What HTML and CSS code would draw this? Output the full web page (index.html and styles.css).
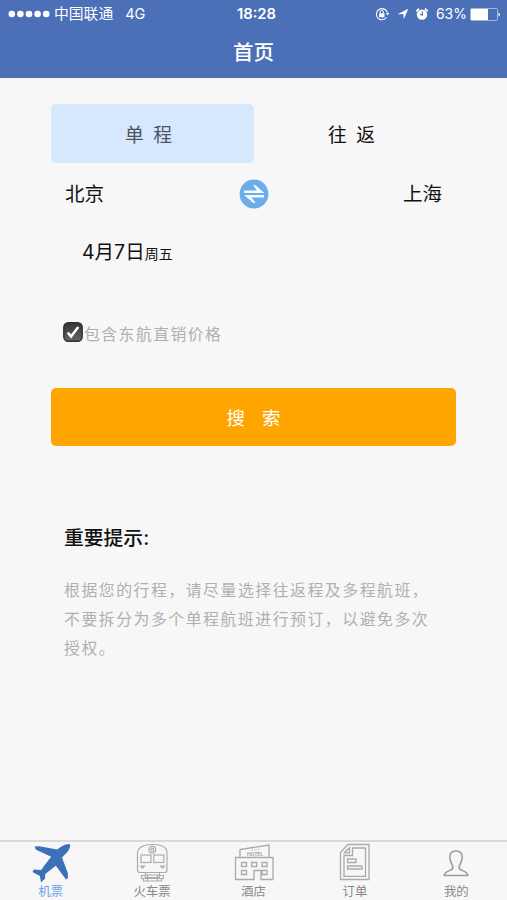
FILE: index.html
```html
<!DOCTYPE html>
<html lang="zh-CN">
<head>
<meta charset="utf-8">
<title>首页</title>
<link rel="stylesheet" href="styles.css">
</head>
<body>
<header class="header">
  <div class="status">
    <div class="status-left">
      <svg width="42" height="8" viewBox="0 0 42 8" fill="#fff"><circle cx="3.8" cy="4" r="3.3"/><circle cx="12.4" cy="4" r="3.3"/><circle cx="21" cy="4" r="3.3"/><circle cx="29.6" cy="4" r="3.3"/><circle cx="38.2" cy="4" r="3.3"/></svg>
      <span class="carrier">中国联通</span><span class="network">4G</span>
    </div>
    <span class="clock">18:28</span>
    <div class="status-right">
      <svg width="15" height="14" viewBox="0 0 15 14"><path d="M11.500 10.500A5.600 5.600 0 1 1 12.200 5.200" fill="none" stroke="#fff" stroke-width="1.1"/><path d="M10.800 5.800h3.600l-1.800 2.700z" fill="#fff"/><rect x="4.100" y="6.300" width="5.400" height="4" fill="#fff"/><path d="M5.200 6.500V5a1.600 1.600 0 0 1 3.200 0v1.500" fill="none" stroke="#fff"/></svg>
      <svg class="locate" width="12" height="12" viewBox="0 0 12 12"><path d="M.5 6.200 11.300.7 6.800 11.300 6.300 6.100z" fill="#fff"/></svg>
      <svg class="alarm" width="14" height="14" viewBox="0 0 14 14"><circle cx="7" cy="7.600" r="5.200" fill="#fff"/><path d="M1.300 4.300 4 1.600M10 1.600l2.700 2.700" stroke="#fff" stroke-width="1.800"/><path d="M7.400 4.500v3.600L5 7.200" fill="none" stroke="#4b70b8" stroke-width="1.100"/></svg>
      <span class="percent">63%</span>
      <svg width="31" height="13" viewBox="0 0 31 13"><rect x=".5" y=".5" width="27" height="12" rx="1.200" fill="none" stroke="#a5b8dc"/><rect x="1" y="1" width="17" height="11" fill="#fff"/><path d="M28.500 4.400q3 2.100 0 4.200z" fill="#fff"/></svg>
    </div>
  </div>
  <h1 class="title">首页</h1>
</header>
<main class="content">
  <div class="trip-tabs">
    <button class="trip-tab active">单 程</button>
    <button class="trip-tab">往 返</button>
  </div>
  <div class="route">
    <span>北京</span>
    <svg width="30" height="30" viewBox="0 0 30 30"><circle cx="15" cy="15" r="14.400" fill="#6dacea"/><path d="M5 11.500h13L14.200 6.500l1.800-.8 9.300 8.200H5zM25 16.100v2.400H12.300l4.200 5-1.800.8-9.700-8.200z" fill="#f8fbff"/></svg>
    <span>上海</span>
  </div>
  <div class="date">4月7日<span class="weekday">周五</span></div>
  <label class="option">
    <svg width="20" height="20" viewBox="0 0 20 20"><defs><linearGradient id="check" x2="0" y2="1"><stop stop-color="#333"/><stop offset="1" stop-color="#656565"/></linearGradient></defs><rect x=".8" y=".8" width="18.400" height="18.400" rx="4.500" fill="url(#check)" stroke="#303030" stroke-width="1.400"/><path d="m4.800 10.600 3.300 4L15.300 5" fill="none" stroke="#fff" stroke-width="2.500"/></svg>
    <span>包含东航直销价格</span>
  </label>
  <button class="search">搜 索</button>
  <section class="notice">
    <h2>重要提示:</h2>
    <p>根据您的行程，请尽量选择往返程及多程航班，<br>不要拆分为多个单程航班进行预订，以避免多次<br>授权。</p>
  </section>
</main>
<nav class="tabbar">
  <a class="tab current"><svg width="42" height="40" viewBox="0 0 42 40"><path d="M38.500 1c2 0 2 2 1 4.400-1 2.700-4 5.600-7.500 9.100L37.800 30l.2 5-2 1.500-10.100-13.800-8.800 6.800-2 2v4l-4.100 4-1.100-6.400-7.400-4.200 1.300-2.300 7.500.3 3-4.500 6.900-8.700L6 6.800 4.500 3.500l5-.2 17.700 3.300C31.500 3.200 35 1 38.500 1z" fill="#3c70b7"/></svg><span>机票</span></a>
  <a class="tab"><svg width="42" height="40" viewBox="0 0 42 40" fill="none" stroke="#acacac" stroke-width="1.200"><path d="M9 29.500a2.500 2.500 0 0 1-2.500-2.500V10C6.500 4.500 12 1.500 21.300 1.500S36 4.500 36 10v17a2.500 2.500 0 0 1-2.500 2.500z"/><circle cx="21.300" cy="6.800" r="3.400"/><circle cx="21.300" cy="6.800" r="1.500"/><rect x="10" y="12" width="10" height="7.500"/><rect x="22.800" y="12" width="10" height="7.500"/><path d="M9.500 23h4l-2 2.200zm20 0h4l-2 2.200zM14.500 29.500v2.500h14v-2.500M10.500 32.500h4v2h14v-2h4v3h-22zM12.500 35.500v2.500h18v-2.500M16.500 32v6m10-6v6"/></svg><span>火车票</span></a>
  <a class="tab"><svg width="42" height="40" viewBox="0 0 42 40" fill="none" stroke="#aaa" stroke-width="1.300"><path d="M2.500 14.500h37.500v22H28V27.500h-7v9H2.500zM7 13.500V6.500L36 2v12M8.500 19.500h5v4h-5zm10.200 0h5v4h-5zm10.300 0h5v4h-5zM8.500 27.500h5v4h-5zm20.500 0h5v4h-5z"/><path d="m18.500 7.700 1.500-1.200m1.500 1.200L23 6.200m1.500 1.200L26 5.900" stroke-width=".9"/><text class="sign" x="14" y="13" textLength="16">HOTEL</text></svg><span>酒店</span></a>
  <a class="tab"><svg width="42" height="40" viewBox="0 0 42 40" fill="none" stroke="#aaa" stroke-width="1.300"><path d="M6.500 36.500V9.500l7.500-8h21v35zM10 33.300V12.500h8.500V5H31.500v28.300zM10.500 9.800l5-5v5zM13.500 16h8.500v3.500H13.500zm0 7H28v3H13.500z"/></svg><span>订单</span></a>
  <a class="tab"><svg width="42" height="40" viewBox="0 0 42 40"><path d="M9.200 32.500c.2-3 2.800-4 5.800-5.100 2.200-.8 3.500-1.500 2.800-4-.8-2.200-3-4.600-3-9.100 0-4.200 2.400-6.300 6.200-6.300s6.200 2.100 6.200 6.300c0 4.500-2.200 6.900-3 9.100-.7 2.500.6 3.200 2.800 4 3 1.100 5.600 2.100 5.800 5.100z" fill="none" stroke="#999" stroke-width="1.500"/></svg><span>我的</span></a>
</nav>
</body>
</html>
```

FILE: styles.css
```css
* { box-sizing: border-box; }
body {
  margin: 0;
  height: 900px;
  display: flex;
  flex-direction: column;
  background: #f7f7f7;
  color: #111;
  font-family: Inter, "Noto Sans CJK SC", sans-serif;
}
button { border: 0; padding: 0; background: none; color: inherit; font-family: inherit; }
svg { display: block; flex: none; }
.header { height: 78px; background: #4b70b8; color: #fff; }
.status {
  height: 28px;
  padding: 0 6px 0 8px;
  display: grid;
  grid-template-columns: 1fr auto 1fr;
  align-items: center;
  font-size: 14px;
  line-height: 20px;
}
.status-left, .status-right { display: flex; align-items: center; }
.status-right { justify-content: flex-end; }
.carrier { margin-left: 4px; font-size: 14.8px; }
.network { margin-left: 12px; font-size: 14.500px; }
.clock { font-weight: 600; font-size: 14.800px; padding-left: 4px; }
.locate { margin-left: 7px; }
.alarm { margin-left: 6px; }
.percent { margin: 0 3px 0 7px; font-size: 14px; }
.title { margin: 0; padding-top: 10px; text-align: center; font-size: 20.500px; line-height: 30px; font-weight: 500; }
.content { flex: 1; padding: 26px 50px 0 51px; }
.trip-tabs { display: flex; height: 59px; }
.trip-tab {
  width: 203px;
  flex: none;
  padding: 0 8px 1px 0;
  border-radius: 5px;
  font-size: 18.800px;
  word-spacing: 4px;
}
.trip-tab.active { background: #d5e8fd; color: #4b5561; }
.route {
  display: flex;
  justify-content: space-between;
  align-items: center;
  height: 62px;
  padding: 0 15px 0 14px;
  font-size: 19.500px;
}
.route span { padding-bottom: 3px; }
.date { padding-left: 31px; height: 54px; line-height: 54px; font-size: 19.500px; }
.weekday { font-size: 14px; }
.option {
  display: flex;
  align-items: center;
  margin-top: 38px;
  padding-left: 12px;
  height: 30px;
  color: #afafaf;
  font-size: 15.800px;
  letter-spacing: 1.500px;
}
.option span { padding: 2px 0 0 1px; }
.search {
  display: block;
  width: 405px;
  height: 58px;
  margin-top: 41px;
  border-radius: 5px;
  background: #ffa500;
  color: #fff;
  font-size: 18.500px;
  word-spacing: 12px;
}
.notice { padding: 77px 0 0 13px; }
.notice h2 { margin: 0; font-size: 19.800px; line-height: 30px; font-weight: 500; }
.notice p {
  margin: 23px 0 0;
  color: #b0b0b0;
  font-size: 15.900px;
  letter-spacing: 1.500px;
  line-height: 29.200px;
  white-space: nowrap;
}
.tabbar { display: flex; height: 60px; padding-top: 1px; border-top: 2px solid #d9d9d9; }
.tab {
  flex: 1;
  display: flex;
  flex-direction: column;
  align-items: center;
  color: #898989;
  font-size: 12.400px;
  line-height: 16px;
}
.tab svg { margin-bottom: 1px; }
.tab.current { color: #6c9ff1; }
.sign { fill: #999; stroke: none; font-size: 5px; font-weight: 600; }
```
